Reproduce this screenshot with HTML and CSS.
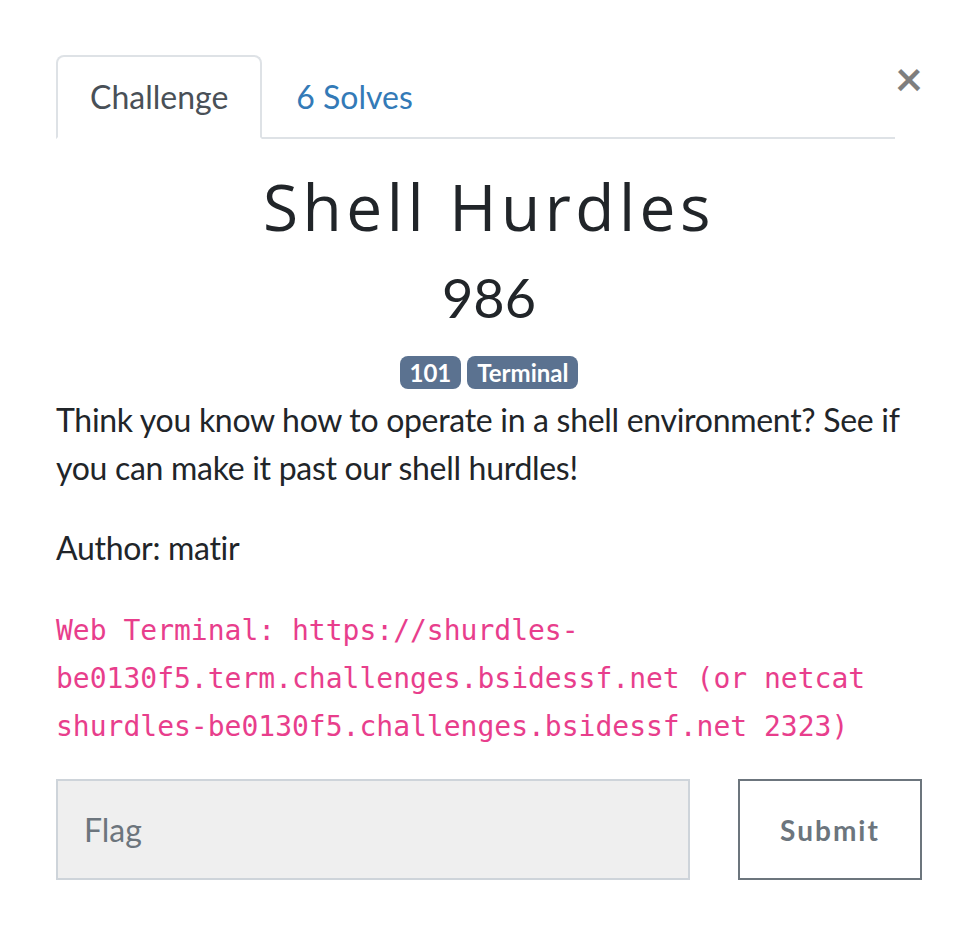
FILE: index.html
```html
<!DOCTYPE html>
<html>
<head>
<meta charset="utf-8">
<link rel="stylesheet" href="styles.css">
</head>
<body>
<div class="modal">
  <div class="tabs-row">
    <ul class="nav-tabs">
      <li class="tab active">Challenge</li>
      <li class="tab link">6 Solves</li>
    </ul>
    <button class="close" type="button">×</button>
  </div>
  <div class="body">
    <h3 class="title">Shell Hurdles</h3>
    <h4 class="value">986</h4>
    <div class="tags">
      <span class="badge">101</span>
      <span class="badge">Terminal</span>
    </div>
    <div class="description">
      <p>Think you know how to operate in a shell environment? See if you can make it past our shell hurdles!</p>
      <p>Author: matir</p>
      <p><code>Web Terminal: https://shurdles-be0130f5.term.challenges.bsidessf.net (or netcat shurdles-be0130f5.challenges.bsidessf.net 2323)</code></p>
    </div>
    <div class="submit-row">
      <input class="flag" type="text" placeholder="Flag">
      <button class="submit" type="button">Submit</button>
    </div>
  </div>
</div>
</body>
</html>
```

FILE: styles.css
```css
html, body {
  margin: 0;
  padding: 0;
  background: #fff;
}
body {
  font-family: Lato, "Open Sans", sans-serif;
  color: #212529;
  font-size: 32px;
  line-height: 1.5;
}
.modal {
  width: 866px;
  padding: 55px 0 0 56px;
}
.tabs-row {
  display: flex;
  align-items: flex-start;
}
.nav-tabs {
  flex: 1;
  display: flex;
  list-style: none;
  margin: 0;
  padding: 0;
  border-bottom: 2px solid #dee2e6;
}
.tab {
  padding: 16px 32px;
  border: 2px solid transparent;
  border-top-left-radius: 8px;
  border-top-right-radius: 8px;
  margin-bottom: -2px;
  line-height: 48px;
}
.tab.active {
  color: #495057;
  border-color: #dee2e6 #dee2e6 #fff;
  background: #fff;
}
.tab.link {
  color: #337ab7;
}
.close {
  width: 27px;
  margin: 0;
  padding: 0;
  border: 0;
  background: none;
  font-family: Lato, sans-serif;
  font-size: 48px;
  font-weight: 700;
  line-height: 48px;
  color: #000;
  opacity: 0.5;
  margin-top: -1px;
  text-align: right;
}
.title {
  margin: 30px 0 0;
  text-align: center;
  font-family: "Open Sans", sans-serif;
  font-weight: 400;
  font-size: 64px;
  letter-spacing: 4.5px;
  line-height: 76px;
  color: #212529;
}
.value {
  margin: 21px 0 0;
  text-align: center;
  font-size: 54px;
  font-weight: 400;
  line-height: 64px;
}
.tags {
  display: flex;
  justify-content: center;
  gap: 6px;
  margin-top: 26px;
}
.badge {
  display: flex;
  align-items: center;
  height: 33px;
  box-sizing: border-box;
  background: #5b7290;
  color: #fff;
  font-size: 24px;
  font-weight: 700;
  line-height: 1;
  padding: 1px 10px 0;
  border-radius: 8px;
}
.description {
  margin-top: 7px;
  letter-spacing: -0.3px;
}
.description p {
  margin: 0 0 32px;
}
.description p:last-child {
  margin-bottom: 31px;
}
code {
  font-family: "DejaVu Sans Mono", monospace;
  font-size: 28px;
  letter-spacing: 0;
  color: #e83e8c;
  word-break: break-word;
}
.submit-row {
  display: flex;
  gap: 48px;
}
.flag {
  width: 634px;
  height: 101px;
  box-sizing: border-box;
  background: #efefef;
  border: 2px solid #ced4da;
  padding: 0 26px;
  font-family: Lato, sans-serif;
  font-size: 32px;
  color: #495057;
  outline: none;
}
.flag::placeholder {
  color: #6c757d;
}
.submit {
  width: 184px;
  height: 101px;
  box-sizing: border-box;
  background: #fff;
  border: 2px solid #6c757d;
  font-family: Lato, sans-serif;
  font-size: 28px;
  font-weight: 700;
  letter-spacing: 2px;
  color: #6c757d;
}
```
